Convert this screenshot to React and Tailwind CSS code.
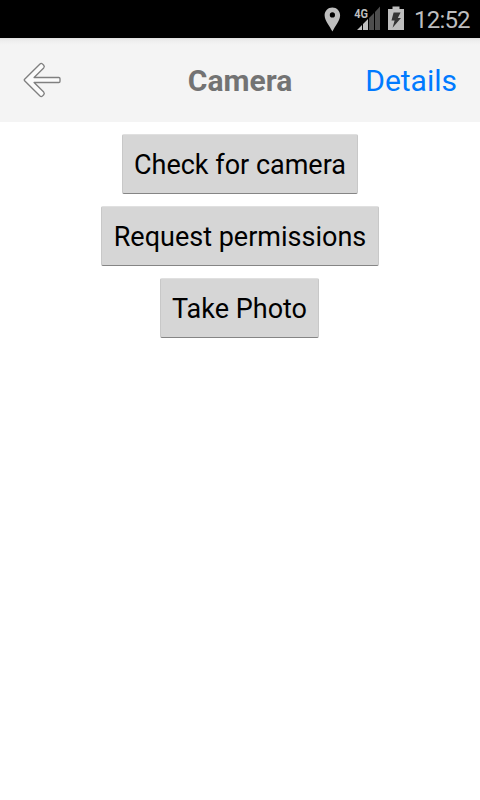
import React from "react";

function StatusBar() {
  return (
    <div className="flex h-[38px] items-center justify-end bg-black pr-[9px] text-[#bebebe]">
      <svg className="h-[38px] w-[90px]" viewBox="320 0 90 38" fill="#bebebe">
        <path
          fillRule="evenodd"
          d="M332.4 7.400c-4.400 0-7.800 3.400-7.800 7.800 0 5.400 5 10.400 7.800 16.300 2.800-5.900 7.700-10.900 7.700-16.300 0-4.400-3.400-7.800-7.700-7.800zm0 4.900a2.600 2.600 0 1 1 0 5.200 2.600 2.600 0 0 1 0-5.200z"
        />
        <text x="354.300" y="17.700" fontFamily="Roboto, sans-serif" fontWeight="700" fontSize="13.500" textLength="13.800" lengthAdjust="spacingAndGlyphs">4G</text>
        <path d="M357 30l5-5v5zM363 24l5-5v11h-5z" />
        <path fill="#4d4d4d" d="M369 18l5-5v17h-5zM375 12l5-5.500V30h-5z" />
        <path d="M392.500 6.500h7V9h4.500v21h-16V9h4.500z" />
        <path fill="#333" d="M393.600 12.500h7l-2.800 5.500h3.200l-8.400 9.700 2-7.200h-3.100z" />
      </svg>
      <span className="ml-1 w-[57px] whitespace-nowrap pt-0.5 text-[24px] leading-9 tracking-[-0.8px]">12:52</span>
    </div>
  );
}

function BackArrow() {
  return (
    <svg className="h-10 w-10" viewBox="22 60 40 40" fill="#fbfbfb" stroke="#808080" strokeWidth="1.350" strokeLinejoin="round">
      <path d="M24.600 79.300L40 63.900Q41.300 62.700 42.600 64.100L43.700 65.300Q44.900 66.600 43.700 67.900L34.100 77.500H58.800Q60 77.500 60 78.700V81.300Q60 82.500 58.800 82.500H34.100L43.700 92.100Q44.900 93.400 43.700 94.700L42.600 95.900Q41.300 97.300 40 96.100L24.600 80.700Q23.900 80 24.600 79.300Z" />
    </svg>
  );
}

function Header() {
  return (
    <header className="grid h-[84px] grid-cols-[1fr_auto_1fr] items-center bg-[linear-gradient(to_bottom,#dcdcdc_0px,#e8e8e8_1px,#eeeeee_3px,#f4f4f4_7px)] px-[22px]">
      <BackArrow />
      <h1 className="pt-0.5 text-[30px] font-bold leading-9 text-[#737373]">Camera</h1>
      <a className="justify-self-end pr-px pt-0.5 text-[30px] leading-9 text-[#007aff]">Details</a>
    </header>
  );
}

const buttons = [
  { label: "Check for camera", width: "w-[236px]" },
  { label: "Request permissions", width: "w-[278px]" },
  { label: "Take Photo", width: "mr-px w-[159px]" },
];

export default function App() {
  return (
    <div className="flex h-[800px] w-[480px] flex-col overflow-hidden bg-white font-['Roboto',sans-serif]">
      <StatusBar />
      <Header />
      <main className="flex flex-col items-center gap-3 pt-3">
        {buttons.map(({ label, width }) => (
          <button
            key={label}
            className={`${width} h-[60px] whitespace-nowrap rounded-[2px] border border-t-[#e0e0e0] border-r-[#c8c8c8] border-b-[#858585] border-l-[#c8c8c8] bg-[#d6d6d6] pt-0.5 text-[27px] leading-9 text-black`}
          >
            {label}
          </button>
        ))}
      </main>
    </div>
  );
}
